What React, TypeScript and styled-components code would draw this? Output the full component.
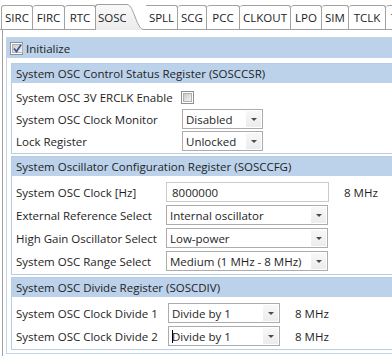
import React from 'react';
import styled, { createGlobalStyle } from 'styled-components';

const GlobalStyle = createGlobalStyle`
  html, body {
    margin: 0;
    padding: 0;
    background: #ffffff;
  }
  body {
    font-family: "Open Sans", "Segoe UI", sans-serif;
    font-size: 11.5px;
    color: #1e1e1e;
  }
  #root {
    width: 392px;
    height: 356px;
    overflow: hidden;
  }
`;

const Page = styled.div`
  width: 430px;
`;

const TabStrip = styled.div`
  display: flex;
  align-items: flex-end;
  height: 30px;
  box-sizing: border-box;
  padding-left: 1px;
  border-bottom: 1px solid #a0a0a0;
`;

const Tab = styled.div<{ $w: number; $first?: boolean; $afterActive?: boolean }>`
  width: ${p => p.$w}px;
  height: 24px;
  flex: none;
  box-sizing: border-box;
  border: 1px solid #a3a3a3;
  border-bottom: none;
  border-left-width: ${p => (p.$first ? 1 : 0)}px;
  border-radius: ${p => (p.$afterActive ? '0 3px 0 0' : '3px 3px 0 0')};
  background: #ffffff;
  display: flex;
  align-items: center;
  justify-content: center;
  white-space: nowrap;
  overflow: hidden;
`;

const ActiveTab = styled.div`
  display: flex;
  flex: none;
  height: 26px;
  margin-bottom: -1px;
  margin-left: -1px;
`;

const ActiveLabel = styled.div`
  width: 31px;
  box-sizing: border-box;
  border-top: 1px solid #a0a0a0;
  border-left: 1px solid #a0a0a0;
  border-top-left-radius: 3px;
  background: linear-gradient(#f9f9f9, #ececec);
  display: flex;
  align-items: center;
  padding-left: 2px;
  padding-bottom: 1px;
  white-space: nowrap;
`;

const Panel = styled.div`
  margin-left: 2px;
  border-left: 1px solid #a0a0a0;
  padding: 7px 0 0 3px;
  height: 330px;
  box-sizing: border-box;
`;

const InitBox = styled.div`
  border: 1px solid #c2d4ea;
`;

const InitHeader = styled.div`
  height: 20px;
  background: #bcd2ea;
  display: flex;
  align-items: center;
  padding-left: 3px;
  gap: 3px;
`;

const InitBody = styled.div`
  padding: 5px 0 3px 4px;
`;

const Group = styled.div<{ $first?: boolean }>`
  border: 1px solid #b8cce4;
  margin-top: ${p => (p.$first ? 0 : 2)}px;
`;

const GroupHeader = styled.div`
  height: 19px;
  background: #bcd2ea;
  display: flex;
  align-items: center;
  padding-left: 4px;
  white-space: nowrap;
`;

const GroupBody = styled.div<{ $label: number; $gap: number; $padTop: number; $padBottom: number }>`
  display: grid;
  grid-template-columns: ${p => p.$label}px max-content max-content;
  row-gap: ${p => p.$gap}px;
  align-items: center;
  padding: ${p => p.$padTop}px 4px ${p => p.$padBottom}px 4px;
`;

const Label = styled.div`
  white-space: nowrap;
`;

const Unit = styled.div`
  padding-left: 15px;
  white-space: nowrap;
`;

const CheckCell = styled.div`
  height: 19px;
  display: flex;
  align-items: center;
  margin-left: -1px;
`;

const CheckBox = styled.span`
  width: 13px;
  height: 13px;
  box-sizing: border-box;
  border: 1px solid #8e8f8f;
  background: #ffffff;
  padding: 1px;
  display: inline-flex;
  flex: none;
`;

const CheckInner = styled.span`
  flex: 1;
  background: linear-gradient(135deg, #cbcbcb, #f4f4f4);
  border: 1px solid #b0b0b0;
  display: flex;
  align-items: center;
  justify-content: center;
`;

const Select = styled.div<{ $w: number }>`
  width: ${p => p.$w}px;
  height: 20px;
  box-sizing: border-box;
  border: 1px solid #acacac;
  background: #ffffff;
  display: flex;
  align-items: stretch;
`;

const SelectText = styled.span`
  flex: 1;
  display: flex;
  align-items: center;
  padding-left: 3px;
  white-space: nowrap;
  overflow: hidden;
`;

const Caret = styled.span`
  width: 1px;
  height: 13px;
  background: #000000;
  margin-right: -1px;
`;

const ArrowButton = styled.span`
  width: 15px;
  margin: 1px;
  background: linear-gradient(#f8f8f8, #ececec);
  display: flex;
  align-items: center;
  justify-content: center;
`;

const Arrow = styled.span`
  width: 0;
  height: 0;
  border-left: 3px solid transparent;
  border-right: 3px solid transparent;
  border-top: 3px solid #4a4a4a;
`;

const TextInput = styled.div<{ $w: number }>`
  width: ${p => p.$w}px;
  height: 20px;
  box-sizing: border-box;
  border: 1px solid #cacaca;
  background: #ffffff;
  display: flex;
  align-items: center;
  padding-left: 5px;
`;

type Control =
  | { kind: 'check' }
  | { kind: 'select'; value: string; w: number; caret?: boolean }
  | { kind: 'input'; value: string; w: number };

interface Row {
  label: string;
  control: Control;
  unit?: string;
}

interface GroupData {
  title: string;
  label: number;
  gap: number;
  padTop: number;
  padBottom: number;
  rows: Row[];
}

const tabs = [
  { name: 'SIRC', w: 32 },
  { name: 'FIRC', w: 32 },
  { name: 'RTC', w: 31 },
  { name: 'SOSC', w: 0, active: true },
  { name: 'SPLL', w: 32 },
  { name: 'SCG', w: 29 },
  { name: 'PCC', w: 33 },
  { name: 'CLKOUT', w: 51 },
  { name: 'LPO', w: 31 },
  { name: 'SIM', w: 27 },
  { name: 'TCLK', w: 37 },
  { name: 'TRGMUX', w: 58 },
];

const groups: GroupData[] = [
  {
    title: 'System OSC Control Status Register (SOSCCSR)',
    label: 166,
    gap: 2,
    padTop: 5,
    padBottom: 2,
    rows: [
      { label: 'System OSC 3V ERCLK Enable', control: { kind: 'check' } },
      { label: 'System OSC Clock Monitor', control: { kind: 'select', value: 'Disabled', w: 81 } },
      { label: 'Lock Register', control: { kind: 'select', value: 'Unlocked', w: 81 } },
    ],
  },
  {
    title: 'System Oscillator Configuration Register (SOSCCFG)',
    label: 150,
    gap: 3,
    padTop: 6,
    padBottom: 3,
    rows: [
      { label: 'System OSC Clock [Hz]', control: { kind: 'input', value: '8000000', w: 163 }, unit: '8 MHz' },
      { label: 'External Reference Select', control: { kind: 'select', value: 'Internal oscillator', w: 162 } },
      { label: 'High Gain Oscillator Select', control: { kind: 'select', value: 'Low-power', w: 162 } },
      { label: 'System OSC Range Select', control: { kind: 'select', value: 'Medium (1 MHz - 8 MHz)', w: 162 } },
    ],
  },
  {
    title: 'System OSC Divide Register (SOSCDIV)',
    label: 152,
    gap: 3,
    padTop: 6,
    padBottom: 3,
    rows: [
      { label: 'System OSC Clock Divide 1', control: { kind: 'select', value: 'Divide by 1', w: 112 }, unit: '8 MHz' },
      { label: 'System OSC Clock Divide 2', control: { kind: 'select', value: 'Divide by 1', w: 112, caret: true }, unit: '8 MHz' },
    ],
  },
];

function TabCurve() {
  return (
    <svg width="20" height="26" viewBox="0 0 20 26">
      <defs>
        <linearGradient id="tabfill" x1="0" y1="0" x2="0" y2="1">
          <stop offset="0" stopColor="#f9f9f9" />
          <stop offset="1" stopColor="#ececec" />
        </linearGradient>
      </defs>
      <path d="M0 0.5 H1 C8 0.5 10 25.5 18 25.5 H20 V26 H0 Z" fill="url(#tabfill)" />
      <path d="M0 0.5 H1 C8 0.5 10 25.5 18 25.5 H20" fill="none" stroke="#a0a0a0" strokeWidth="1" />
    </svg>
  );
}

function CheckMark() {
  return (
    <svg width="9" height="9" viewBox="0 0 9 9">
      <path d="M1 4.5 L3.5 7.5 L8 0.8" fill="none" stroke="#3c5a9a" strokeWidth="1.8" />
    </svg>
  );
}

function Check({ checked }: { checked?: boolean }) {
  return (
    <CheckBox>
      <CheckInner>{checked && <CheckMark />}</CheckInner>
    </CheckBox>
  );
}

function ControlView({ control }: { control: Control }) {
  if (control.kind === 'check') {
    return (
      <CheckCell>
        <Check />
      </CheckCell>
    );
  }
  if (control.kind === 'input') {
    return <TextInput $w={control.w}>{control.value}</TextInput>;
  }
  return (
    <Select $w={control.w}>
      <SelectText>
        {control.caret && <Caret />}
        {control.value}
      </SelectText>
      <ArrowButton>
        <Arrow />
      </ArrowButton>
    </Select>
  );
}

export default function App() {
  return (
    <>
      <GlobalStyle />
      <Page>
        <TabStrip>
          {tabs.map((t, i) =>
            t.active ? (
              <ActiveTab key={t.name}>
                <ActiveLabel>{t.name}</ActiveLabel>
                <TabCurve />
              </ActiveTab>
            ) : (
              <Tab key={t.name} $w={t.w} $first={i === 0} $afterActive={tabs[i - 1]?.active}>
                {t.name}
              </Tab>
            )
          )}
        </TabStrip>
        <Panel>
          <InitBox>
            <InitHeader>
              <Check checked />
              <span>Initialize</span>
            </InitHeader>
            <InitBody>
              {groups.map((g, gi) => (
                <Group key={g.title} $first={gi === 0}>
                  <GroupHeader>{g.title}</GroupHeader>
                  <GroupBody $label={g.label} $gap={g.gap} $padTop={g.padTop} $padBottom={g.padBottom}>
                    {g.rows.map(r => (
                      <React.Fragment key={r.label}>
                        <Label>{r.label}</Label>
                        <ControlView control={r.control} />
                        {r.unit ? <Unit>{r.unit}</Unit> : <span />}
                      </React.Fragment>
                    ))}
                  </GroupBody>
                </Group>
              ))}
            </InitBody>
          </InitBox>
        </Panel>
      </Page>
    </>
  );
}
